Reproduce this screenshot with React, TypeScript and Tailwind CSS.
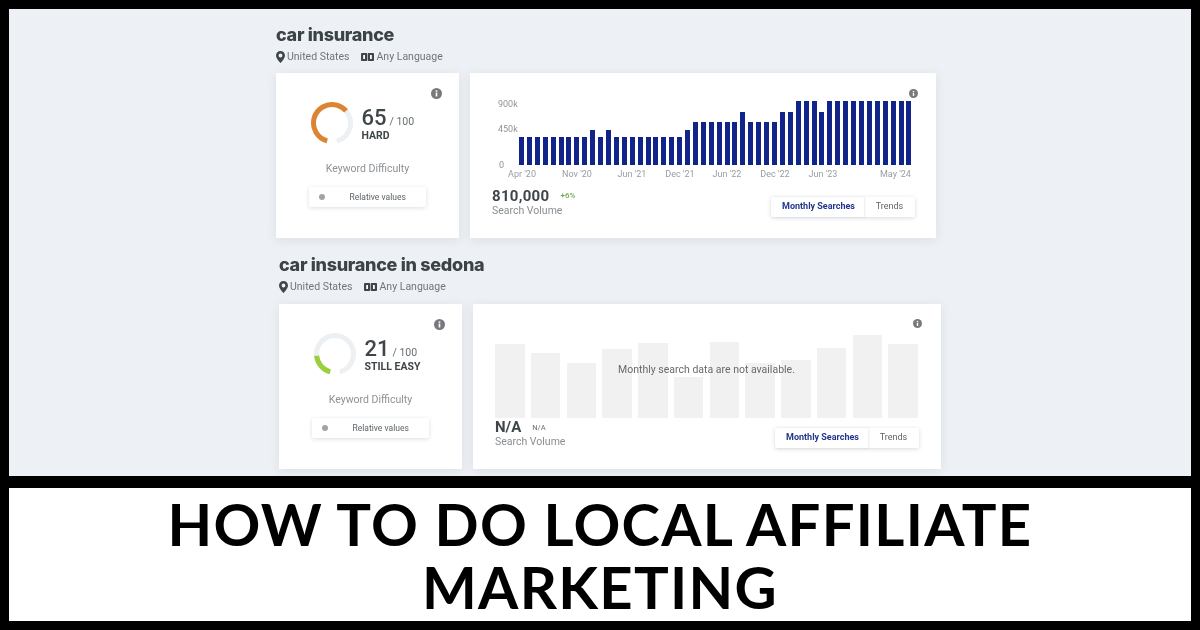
import React from "react";

const Info = ({ size = 11 }: { size?: number }) => (
  <svg width={size} height={size} viewBox="0 0 12 12">
    <circle cx="6" cy="6" r="6" fill="#77797c" />
    <rect x="5.1" y="5" width="1.8" height="4.2" fill="#fff" />
    <rect x="5.1" y="2.6" width="1.8" height="1.6" fill="#fff" />
  </svg>
);

const Pin = () => (
  <svg width="9" height="12" viewBox="0 0 9 12">
    <path fillRule="evenodd" d="M4.5 0C2 0 0 2 0 4.4 0 7.4 4.5 12 4.5 12S9 7.4 9 4.4C9 2 7 0 4.5 0Zm0 2.6a1.9 1.9 0 1 1 0 3.8 1.9 1.9 0 0 1 0-3.8Z" fill="#3f4649" />
  </svg>
);

const Lang = () => (
  <svg width="13" height="8" viewBox="0 0 13 8">
    <rect x="0" y="0" width="6.2" height="8" rx="0.8" fill="#3f4649" />
    <rect x="6.8" y="0" width="6.2" height="8" rx="0.8" fill="#3f4649" />
    <rect x="2.2" y="2" width="1.8" height="4" fill="#fff" />
    <rect x="9" y="2" width="1.8" height="4" fill="#fff" />
  </svg>
);

const Ring = ({ value, color }: { value: number; color: string }) => (
  <svg width="44" height="44" viewBox="0 0 44 44" className="shrink-0">
    <g transform="rotate(105 22 22)" fill="none" strokeWidth="5">
      <circle cx="22" cy="22" r="18.5" pathLength={360} stroke="#edf0f3" strokeDasharray="330 30" />
      <circle cx="22" cy="22" r="18.5" pathLength={360} stroke={color} strokeDasharray={`${value * 3.3} 400`} />
    </g>
  </svg>
);

const Head = ({ title }: { title: string }) => (
  <div className="flex flex-col">
    <h2 className="mt-[1px] text-[18px] leading-[22px] font-extrabold text-[#3c4347] tracking-[-0.3px] font-['Inter',sans-serif]">{title}</h2>
    <div className="mt-[4px] flex items-center h-[14px] text-[10.5px] text-[#6f767b]">
      <Pin />
      <span className="ml-[2px]">United States</span>
      <span className="ml-[11px]"><Lang /></span>
      <span className="ml-[3px]">Any Language</span>
    </div>
  </div>
);

const Difficulty = ({ value, label, color }: { value: number; label: string; color: string }) => (
  <div className="relative w-[183px] h-[165px] bg-white shadow-[0_2px_10px_rgba(60,70,90,0.10)] flex flex-col items-center pt-[28px] shrink-0">
    <div className="absolute right-[17px] top-[15px]"><Info /></div>
    <div className="flex items-center ml-[-2px]">
      <Ring value={value} color={color} />
      <div className="ml-[8px] flex flex-col w-[62px]">
        <div className="flex items-baseline text-[#3f4649]">
          <span className="text-[22px] leading-[25px] font-medium">{value}</span>
          <span className="ml-[3px] text-[10.5px] text-[#666c70]">/ 100</span>
        </div>
        <span className="text-[10.5px] leading-[12px] font-bold text-[#3f4649] whitespace-nowrap">{label}</span>
      </div>
    </div>
    <span className="mt-[17px] text-[10.5px] leading-[14px] text-[#8d9296]">Keyword Difficulty</span>
    <div className="mt-[11px] ml-[-1px] w-[117px] h-[20px] rounded-[2px] bg-white shadow-[0_1px_4px_rgba(60,70,90,0.18)] flex items-center">
      <span className="ml-[10px] w-[6px] h-[6px] rounded-full bg-[#a0a4a6]" />
      <span className="ml-[25px] text-[8.5px] text-[#5c6367]">Relative values</span>
    </div>
  </div>
);

const Toggle = () => (
  <div className="flex h-[20px] rounded-[2px] bg-white shadow-[0_1px_4px_rgba(60,70,90,0.2)] text-[9px] items-center">
    <span className="w-[93px] h-full flex items-center justify-center pl-[2px] font-bold text-[#22378c] shadow-[1px_0_2px_rgba(60,70,90,0.1)]">Monthly Searches</span>
    <span className="w-[51px] text-center text-[#5c6367]">Trends</span>
  </div>
);

const L = 28, M = 35, H = 43, T = 53, X = 64.5;
const bars = [
  ...Array(9).fill(L), M, L, M,
  ...Array(9).fill(L), M,
  ...Array(6).fill(H), T,
  ...Array(4).fill(H), T, T, X, X, X, T,
  ...Array(11).fill(X),
];
const xLabels: [string, string][] = [
  ["Apr '20", "ml-0"], ["Nov '20", "ml-[25px]"], ["Jun '21", "ml-[25px]"], ["Dec '21", "ml-[18px]"],
  ["Jun '22", "ml-[17px]"], ["Dec '22", "ml-[18px]"], ["Jun '23", "ml-[18px]"], ["May '24", "ml-[42px]"],
];

const Volume = () => (
  <div className="relative w-[466px] h-[165px] bg-white shadow-[0_2px_10px_rgba(60,70,90,0.10)] pl-[22px] pt-[22px]">
    <div className="absolute right-[18px] top-[16px]"><Info size={9} /></div>
    <div className="flex items-start">
      <div className="w-[27px] h-[70px] flex flex-col text-[9px] leading-[12px] text-[#8f9498]">
        <span className="mt-[3px] ml-[6px]">900k</span>
        <span className="ml-[6px] mt-[13px]">450k</span>
        <span className="ml-[7px] mt-[24px]">0</span>
      </div>
      <div className="w-[393px] h-[70px] flex items-end justify-between">
        {bars.map((v, i) => (
          <div key={i} className="w-[5px] bg-[#10248a]" style={{ height: v }} />
        ))}
      </div>
    </div>
    <div className="flex text-[9px] leading-[12px] text-[#989da1] ml-[15px] mt-[3px]">
      {xLabels.map(([t, c]) => (
        <span key={t} className={`w-[30px] text-center whitespace-nowrap ${c}`}>{t}</span>
      ))}
    </div>
    <div className="flex items-end justify-between mr-[21px] mt-[6px]">
      <div className="flex flex-col">
        <div className="flex items-center">
          <span className="text-[15px] leading-[20px] font-bold text-[#3f4649] tracking-[0.3px]">810,000</span>
          <span className="ml-[11px] text-[8px] font-medium text-[#6aa84f]">+6%</span>
        </div>
        <span className="mt-[-1px] text-[10.5px] leading-[12px] text-[#8a8f93]">Search Volume</span>
      </div>
      <Toggle />
    </div>
  </div>
);

const grayBars = [74, 65, 55, 69, 75, 41, 76, 55, 58, 70, 83, 74];

const VolumeEmpty = () => (
  <div className="relative w-[468px] h-[165px] bg-white shadow-[0_2px_10px_rgba(60,70,90,0.10)] pl-[22px] pt-[31px]">
    <div className="absolute right-[19px] top-[15px]"><Info size={9} /></div>
    <div className="relative w-[423px] h-[83px] flex items-end justify-between">
      {grayBars.map((h, i) => (
        <div key={i} className="w-[29.5px] bg-[#f1f1f1]" style={{ height: h }} />
      ))}
      <span className="absolute left-0 right-0 top-[28px] text-center text-[10.5px] leading-[14px] text-[#666b6e]">Monthly search data are not available.</span>
    </div>
    <div className="flex items-end justify-between mr-[22px]">
      <div className="flex flex-col">
        <div className="flex items-center">
          <span className="text-[15px] leading-[19px] font-bold text-[#3f4649]">N/A</span>
          <span className="ml-[11px] text-[7.5px] text-[#6b7074]">N/A</span>
        </div>
        <span className="mt-[-1px] text-[10.5px] leading-[12px] text-[#8a8f93]">Search Volume</span>
      </div>
      <Toggle />
    </div>
  </div>
);

export default function App() {
  return (
    <div className="w-[1200px] h-[630px] bg-black p-[9px] flex flex-col overflow-hidden font-['Roboto',sans-serif]">
      <div className="h-[467px] bg-[#edf1f5] overflow-hidden pl-[267px] pt-[14px] blur-[0.4px]">
        <Head title="car insurance" />
        <div className="flex gap-[11px] mt-[9px]">
          <Difficulty value={65} label="HARD" color="#dd8433" />
          <Volume />
        </div>
        <div className="ml-[3px] mt-[15px]">
          <Head title="car insurance in sedona" />
          <div className="flex gap-[11px] mt-[10px]">
            <Difficulty value={21} label="STILL EASY" color="#9bcf3c" />
            <VolumeEmpty />
          </div>
        </div>
      </div>
      <div className="mt-[12px] h-[133px] bg-white flex items-center justify-center text-center">
        <h1 className="w-[1000px] text-[58px] leading-[63px] font-bold text-black tracking-[1.3px] font-['Lato',sans-serif]">HOW TO DO LOCAL AFFILIATE MARKETING</h1>
      </div>
    </div>
  );
}
